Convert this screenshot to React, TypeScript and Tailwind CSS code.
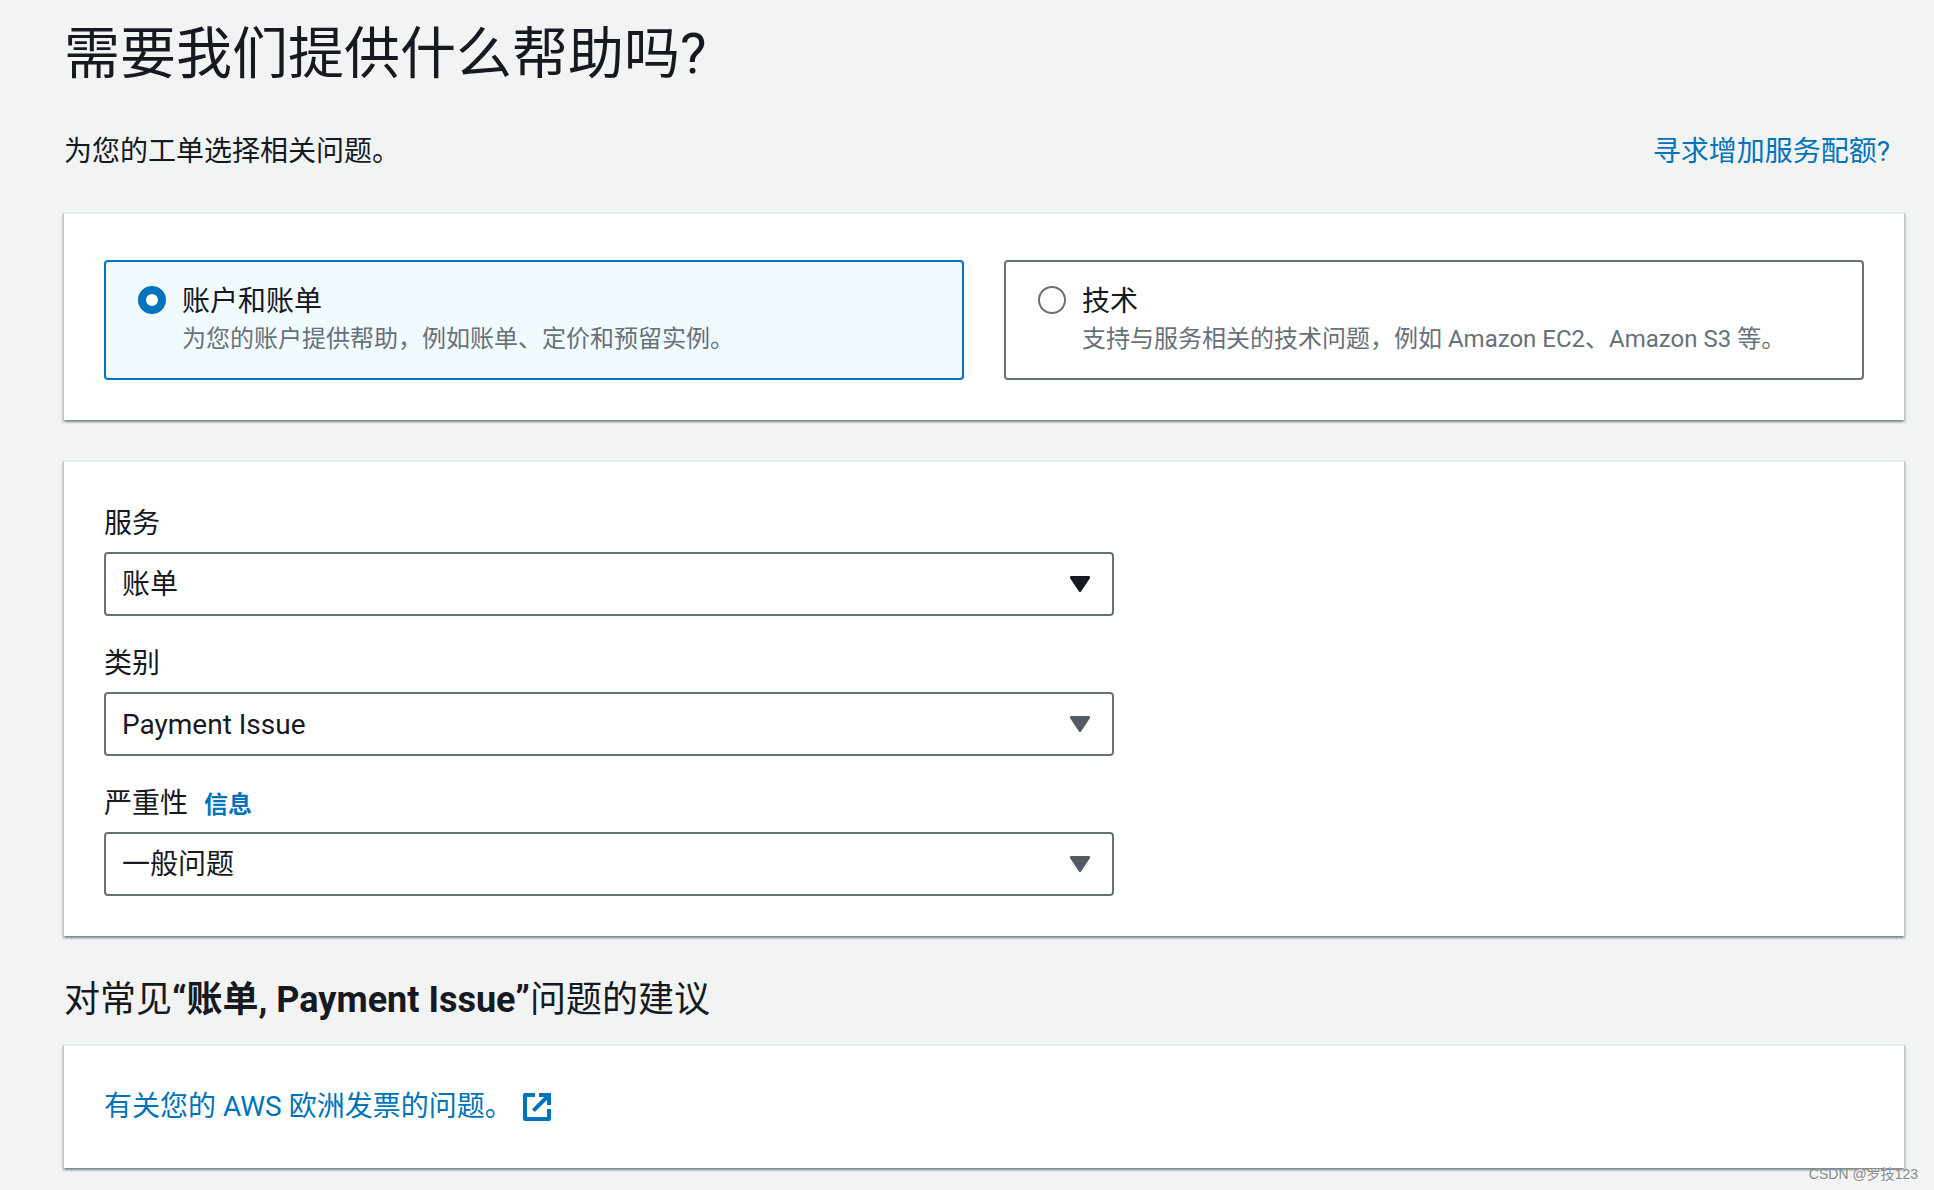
import { useState } from "react";

const cases = [
  {
    id: "account",
    title: "账户和账单",
    description: "为您的账户提供帮助，例如账单、定价和预留实例。",
  },
  {
    id: "technical",
    title: "技术",
    description: "支持与服务相关的技术问题，例如 Amazon EC2、Amazon S3 等。",
  },
];

const fields = [
  { id: "service", label: "服务", value: "账单", arrow: "fill-[#16191f]" },
  { id: "category", label: "类别", value: "Payment Issue", arrow: "fill-[#545b64]" },
  { id: "severity", label: "严重性", value: "一般问题", arrow: "fill-[#545b64]", info: true },
];

const panel =
  "border-t-2 border-[#eaeded] bg-white shadow-[0_2px_2px_rgba(0,28,36,0.3),2px_2px_2px_rgba(0,28,36,0.15),-2px_2px_2px_rgba(0,28,36,0.15)]";

function ExternalIcon() {
  return (
    <svg
      viewBox="0 0 16 16"
      className="size-8 fill-none stroke-[#0073bb] stroke-2"
      aria-hidden="true"
    >
      <path d="M9 2h5v5M6.2 9.8L14 2" />
      <path d="M14 9v5H2V2h5" strokeLinejoin="round" />
    </svg>
  );
}

function CaseTypes() {
  const [selected, setSelected] = useState("account");

  return (
    <div className={`${panel} grid grid-cols-2 gap-10 px-10 pt-[46px] pb-10`}>
      {cases.map((item) => (
        <label
          key={item.id}
          className="flex h-[120px] gap-4 rounded-sm border-2 border-[#687078] pt-5 pl-8 has-checked:border-[#0073bb] has-checked:bg-[#f1faff]"
        >
          <input
            type="radio"
            name="case-type"
            checked={selected === item.id}
            onChange={() => setSelected(item.id)}
            className="mt-1 size-7 shrink-0 appearance-none rounded-full border-2 border-[#687078] bg-white checked:border-8 checked:border-[#0073bb]"
          />
          <span className="flex flex-col">
            <span className="leading-10">{item.title}</span>
            <span className="text-2xl leading-[34px] text-[#687078]">{item.description}</span>
          </span>
        </label>
      ))}
    </div>
  );
}

function CaseDetails() {
  return (
    <div className={`${panel} mt-10 flex flex-col gap-[26px] p-10`}>
      {fields.map((field) => (
        <div key={field.id} className="flex max-w-[1010px] flex-col gap-1.5">
          <div className="flex items-baseline gap-4 leading-11">
            <label htmlFor={field.id}>{field.label}</label>
            {field.info && (
              <a href="#info" className="text-2xl leading-10 font-bold text-[#0073bb]">
                信息
              </a>
            )}
          </div>
          <div className="relative">
            <select
              id={field.id}
              className="block h-16 w-full appearance-none rounded-sm border-2 border-[#687078] bg-white px-4 pt-0.5"
            >
              <option>{field.value}</option>
            </select>
            <svg
              viewBox="0 0 20 16"
              className={`pointer-events-none absolute inset-y-0 right-6 my-auto h-4 w-5 ${field.arrow}`}
              aria-hidden="true"
            >
              <path d="M1.5 0h17A1.5 1.5 0 0 1 19.7 2.6L11.2 15.3a1.5 1.5 0 0 1-2.4 0L.3 2.6A1.5 1.5 0 0 1 1.5 0Z" />
            </svg>
          </div>
        </div>
      ))}
    </div>
  );
}

export default function App() {
  return (
    <main
      lang="zh-CN"
      className="relative min-h-screen bg-[#f2f3f3] pt-5 pr-[30px] pb-5 pl-16 font-['Roboto','Noto_Sans_CJK_SC',sans-serif] text-[28px] text-[#16191f]"
    >
      <h1 className="text-[56px] leading-[68px]">需要我们提供什么帮助吗?</h1>

      <div className="mt-11 mb-10 flex justify-between pr-3.5 leading-10">
        <p>为您的工单选择相关问题。</p>
        <a href="#quota" className="text-[#0073bb]">
          寻求增加服务配额?
        </a>
      </div>

      <CaseTypes />
      <CaseDetails />

      <h2 className="mt-[42px] mb-[22px] text-4xl leading-11">
        对常见<b>“账单, Payment Issue”</b>问题的建议
      </h2>

      <div className={`${panel} p-10 leading-[42px]`}>
        <a href="#invoice" className="inline-flex items-center gap-2 align-top text-[#0073bb]">
          有关您的 AWS 欧洲发票的问题。
          <ExternalIcon />
        </a>
      </div>

      <span className="absolute right-4 bottom-1.5 font-['Liberation_Sans','Noto_Sans_CJK_SC',sans-serif] text-sm text-[#888] [text-shadow:1px_1px_1px_#fff]">
        CSDN @罗技123
      </span>
    </main>
  );
}
